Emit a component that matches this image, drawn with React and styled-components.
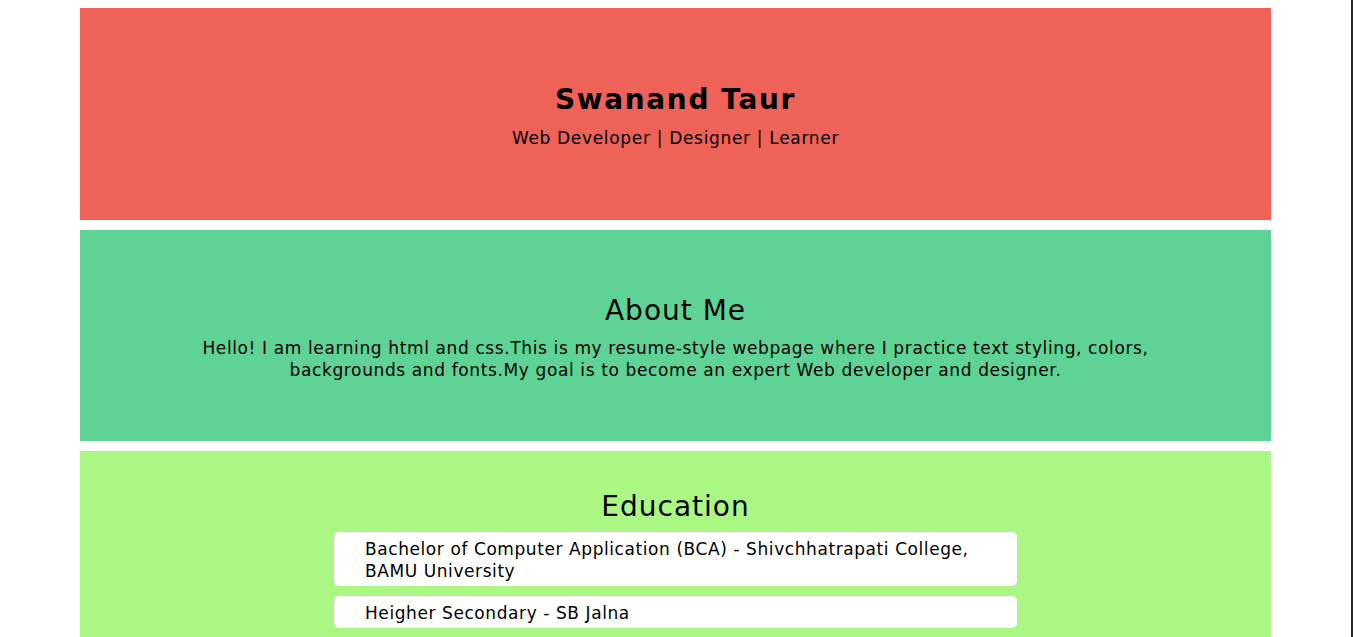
import React from "react";
import styled, { createGlobalStyle } from "styled-components";

const Global = createGlobalStyle`
  html, body { margin: 0; padding: 0; background: #fff; }
  body {
    font-family: "DejaVu Sans", Verdana, sans-serif;
    color: #000;
  }
`;

const Page = styled.div`
  width: 1351px;
  min-height: 637px;
  border-right: 2px solid #2a2a2a;
  padding: 8px 0;
  display: flex;
  flex-direction: column;
  align-items: center;
  gap: 10px;
  box-sizing: content-box;
`;

const Section = styled.section`
  width: 1191px;
  box-sizing: border-box;
  background: ${(p) => p.$bg};
  height: ${(p) => p.$h || "auto"};
  padding: ${(p) => p.$pad};
  display: flex;
  flex-direction: column;
  align-items: center;
  text-align: center;
`;

const Name = styled.h1`
  margin: 0;
  font-size: 28px;
  font-weight: bold;
  line-height: 33px;
  letter-spacing: 1.6px;
`;

const Subtitle = styled.p`
  margin: 11px 0 0;
  font-size: 17px;
  line-height: 22px;
  letter-spacing: 0.68px;
`;

const Heading = styled.h2`
  margin: 0;
  font-size: 28px;
  font-weight: normal;
  line-height: 33px;
  letter-spacing: 1px;
`;

const Para = styled.p`
  margin: 10px 0 0;
  max-width: 1010px;
  font-size: 17px;
  line-height: 22px;
  letter-spacing: 0.62px;
`;

const List = styled.ul`
  list-style: none;
  margin: 9px 0 0;
  padding: 0;
  width: 683px;
  display: flex;
  flex-direction: column;
  gap: 10px;
  text-align: left;
`;

const Item = styled.li`
  background: #fff;
  border-radius: 5px;
  padding: 6px 30px 4px 31px;
  font-size: 17px;
  line-height: 22px;
  letter-spacing: 0.58px;
`;

export default function App() {
  return (
    <>
      <Global />
      <Page>
        <Section $bg="#ef6258" $h="212px" $pad="75px 20px 0">
          <Name>Swanand Taur</Name>
          <Subtitle>Web Developer | Designer | Learner</Subtitle>
        </Section>
        <Section $bg="#5fd395" $h="211px" $pad="64px 20px 0">
          <Heading>About Me</Heading>
          <Para>
            Hello! I am learning html and css.This is my resume-style webpage where I practice text styling, colors, backgrounds and fonts.My goal is to become an expert Web developer and designer.
          </Para>
        </Section>
        <Section $bg="#abf783" $pad="39px 20px 40px">
          <Heading>Education</Heading>
          <List>
            <Item>Bachelor of Computer Application (BCA) - Shivchhatrapati College, BAMU University</Item>
            <Item>Heigher Secondary - SB Jalna</Item>
          </List>
        </Section>
      </Page>
    </>
  );
}
